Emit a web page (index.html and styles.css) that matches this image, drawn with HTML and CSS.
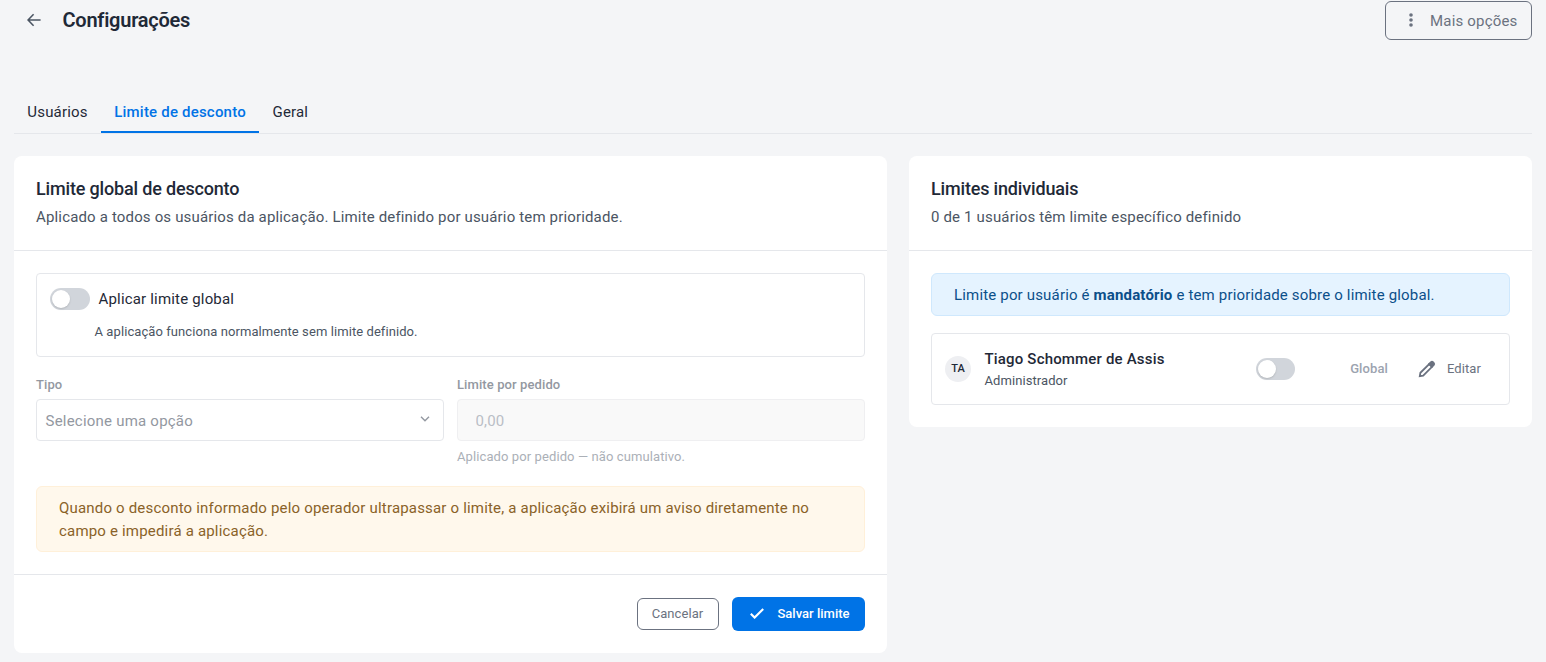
FILE: index.html
```html
<!DOCTYPE html>
<html lang="pt-BR">
<head>
  <meta charset="UTF-8" />
  <title>Configurações</title>
  <link rel="stylesheet" href="styles.css">
</head>
<body>

  <!-- Cabeçalho -->
  <header class="page-header">
    <a class="back" href="#" aria-label="Voltar">
      <svg width="14" height="14" viewBox="0 0 14 14" fill="none" stroke="currentColor" stroke-width="1.6">
        <path d="M13.6 7H1.4M6.6 1.2L1 7l5.6 5.8"></path>
      </svg>
    </a>
    <h1>Configurações</h1>
    <button class="btn btn-outline btn-more">
      <svg width="4" height="14" viewBox="0 0 4 14" fill="currentColor">
        <circle cx="2" cy="2" r="1.8"></circle>
        <circle cx="2" cy="7" r="1.8"></circle>
        <circle cx="2" cy="12" r="1.8"></circle>
      </svg>
      <span>Mais opções</span>
    </button>
  </header>

  <!-- Abas -->
  <nav class="tabs">
    <a class="tab" href="#">Usuários</a>
    <a class="tab active" href="#">Limite de desconto</a>
    <a class="tab" href="#">Geral</a>
  </nav>

  <main class="content">
    <!-- Limite global -->
    <section class="card">
      <div class="card-header">
        <h2>Limite global de desconto</h2>
        <p>Aplicado a todos os usuários da aplicação. Limite definido por usuário tem prioridade.</p>
      </div>

      <div class="card-body">
        <div class="switch-box">
          <label class="switch-line">
            <span class="switch"></span>
            <span>Aplicar limite global</span>
          </label>
          <p class="switch-help">A aplicação funciona normalmente sem limite definido.</p>
        </div>

        <div class="fields">
          <div class="field">
            <label>Tipo</label>
            <div class="select">
              <span>Selecione uma opção</span>
              <svg width="10" height="6" viewBox="0 0 10 6" fill="none" stroke="currentColor" stroke-width="1.4">
                <path d="M1 0.8l4 4 4-4"></path>
              </svg>
            </div>
          </div>
          <div class="field">
            <label for="limite">Limite por pedido</label>
            <input type="text" id="limite" placeholder="0,00" disabled>
            <small>Aplicado por pedido — não cumulativo.</small>
          </div>
        </div>

        <div class="alert alert-warning">
          Quando o desconto informado pelo operador ultrapassar o limite, a aplicação exibirá um aviso diretamente no campo e impedirá a aplicação.
        </div>
      </div>

      <div class="card-footer">
        <button class="btn btn-outline btn-cancel">Cancelar</button>
        <button class="btn btn-primary">
          <svg width="14" height="11" viewBox="0 0 14 11" fill="none" stroke="currentColor" stroke-width="2.1">
            <path d="M0.8 5.8l3.8 3.8L13.2 1"></path>
          </svg>
          <span>Salvar limite</span>
        </button>
      </div>
    </section>

    <!-- Limites individuais -->
    <section class="card">
      <div class="card-header">
        <h2>Limites individuais</h2>
        <p>0 de 1 usuários têm limite específico definido</p>
      </div>

      <div class="card-body">
        <div class="alert alert-info">
          Limite por usuário é <strong>mandatório</strong> e tem prioridade sobre o limite global.
        </div>

        <div class="user-row">
          <span class="avatar">TA</span>
          <div class="user-info">
            <strong>Tiago Schommer de Assis</strong>
            <span>Administrador</span>
          </div>
          <span class="switch switch-user"></span>
          <span class="user-limit">Global</span>
          <button class="btn-edit">
            <svg width="18" height="18" viewBox="0 0 18 18" fill="none" stroke="currentColor" stroke-width="1.8">
              <path d="M1.8 16.2l.6-3.4 8.8-8.8 2.8 2.8-8.8 8.8z"></path>
              <path d="M11.2 4l1.8-1.8q1-.8 2 0l.8.8q.8 1 0 2L14 6.8z" fill="currentColor"></path>
            </svg>
            <span>Editar</span>
          </button>
        </div>
      </div>
    </section>
  </main>

</body>
</html>
```
FILE: styles.css
```css
:root {
  --color-primary: #0073e6;
  --color-bg: #f4f5f7;
  --color-dark: #1f2937;
  --color-text: #4b5563;
  --color-muted: #6b7280;
  --color-border: #e5e7eb;
}

* {
  box-sizing: border-box;
  margin: 0;
  padding: 0;
}
body {
  background: var(--color-bg);
  font-family: Roboto, sans-serif;
  font-size: 15px;
  letter-spacing: 0.18px;
  color: var(--color-dark);
  padding: 1px 14px 0;
}
a {
  color: inherit;
  text-decoration: none;
}
button,
input {
  font: inherit;
  letter-spacing: inherit;
}

/* Cabeçalho */
.page-header {
  display: flex;
  align-items: center;
  height: 39px;
  padding-left: 13px;
}
.page-header h1 {
  flex: 1;
  margin-left: 21.5px;
  padding-bottom: 2px;
  font-size: 20px;
  font-weight: 600;
  letter-spacing: -0.25px;
}
.back {
  display: flex;
  padding-bottom: 1px;
  color: var(--color-text);
}

/* Botões */
.btn {
  display: flex;
  align-items: center;
  justify-content: center;
  border-radius: 6px;
  cursor: pointer;
}
.btn-outline {
  background: transparent;
  border: 1px solid var(--color-muted);
  color: var(--color-muted);
}
.btn-more {
  width: 147px;
  height: 39px;
  gap: 17.5px;
  padding-left: 9px;
}
.btn-more svg {
  margin-bottom: 2px;
}
.btn-cancel {
  width: 82px;
  height: 32px;
  padding: 0 1px 2px 0;
  font-size: 13px;
  letter-spacing: 0.08px;
}
.btn-primary {
  width: 133px;
  height: 34px;
  gap: 13px;
  padding: 0 0 1px 3px;
  background: var(--color-primary);
  border: none;
  color: #fff;
  font-size: 13px;
  font-weight: 500;
  letter-spacing: 0.02px;
}

/* Abas */
.tabs {
  display: flex;
  height: 42px;
  margin-top: 52px;
  border-bottom: 1px solid var(--color-border);
}
.tab {
  height: 41px;
  padding: 0 13.3px;
  line-height: 40px;
  border-bottom: 2px solid transparent;
}
.tab.active {
  color: var(--color-primary);
  border-bottom-color: var(--color-primary);
  font-weight: 500;
  letter-spacing: 0.2px;
}

/* Cartões */
.content {
  display: grid;
  grid-template-columns: 873px 1fr;
  align-items: start;
  gap: 22px;
  margin-top: 22px;
}
.card {
  background: #fff;
  border-radius: 8px;
}
.card-header {
  height: 95px;
  padding: 22px 22px 0;
  border-bottom: 1px solid var(--color-border);
}
.card-header h2 {
  font-size: 18px;
  font-weight: 500;
  line-height: 22px;
  letter-spacing: -0.17px;
}
.card-header p {
  margin-top: 6px;
  line-height: 23px;
  letter-spacing: 0.16px;
  color: var(--color-text);
}
.card-body {
  padding: 22px;
}
.card-footer {
  display: flex;
  align-items: center;
  justify-content: flex-end;
  gap: 13px;
  padding: 22px;
  border-top: 1px solid var(--color-border);
}

/* Chave liga/desliga */
.switch {
  display: flex;
  align-items: center;
  flex-shrink: 0;
  width: 40px;
  height: 22px;
  padding-left: 2px;
  border-radius: 11px;
  background: #d1d5db;
}
.switch::before {
  content: "";
  width: 18px;
  height: 18px;
  border-radius: 50%;
  background: #fff;
  box-shadow: 0 1px 2px rgba(0, 0, 0, 0.15);
}
.switch-box {
  height: 84px;
  padding: 14px 13px;
  border: 1px solid var(--color-border);
  border-radius: 4px;
}
.switch-line {
  display: flex;
  align-items: center;
  gap: 8.5px;
}
.switch-help {
  margin: 13px 0 0 44.5px;
  font-size: 13px;
  line-height: 18px;
  letter-spacing: 0.08px;
  color: var(--color-text);
}

/* Campos */
.fields {
  display: grid;
  grid-template-columns: 1fr 1fr;
  gap: 13px;
  margin-top: 18px;
}
.field label {
  display: block;
  height: 24px;
  font-size: 13px;
  font-weight: 500;
  line-height: 19px;
  letter-spacing: 0.1px;
  color: #9398a1;
}
.field small {
  display: block;
  margin-top: 7px;
  font-size: 13px;
  line-height: 18px;
  letter-spacing: 0.1px;
  color: #abb0b7;
}
.select,
.field input {
  width: 100%;
  height: 42px;
  border: 1px solid var(--color-border);
  border-radius: 4px;
}
.select {
  display: flex;
  align-items: center;
  justify-content: space-between;
  padding: 2px 13px 0 8.5px;
  letter-spacing: 0.22px;
  color: #9398a1;
}
.select svg {
  margin-top: -4px;
}
.field input {
  padding: 2px 17.5px 0;
  background: #f9f9f9;
  border-color: #efeff1;
}
.field input::placeholder {
  color: #b9bec6;
}

/* Avisos */
.alert {
  padding: 10px 22px 8px;
  border: 1px solid;
  border-radius: 6px;
  line-height: 23px;
}
.alert-warning {
  margin-top: 20px;
  background: #fff8ec;
  border-color: #fff0d9;
  color: #8a6228;
  letter-spacing: 0.185px;
}
.alert-info {
  background: #e5f3ff;
  border-color: #cfe8fd;
  color: #0b4f8a;
  letter-spacing: 0.17px;
}

/* Usuários */
.user-row {
  display: flex;
  align-items: center;
  height: 72px;
  margin-top: 17px;
  padding: 0 28px 0 13px;
  border: 1px solid var(--color-border);
  border-radius: 4px;
}
.avatar {
  width: 26px;
  height: 26px;
  border-radius: 50%;
  background: #eeeff2;
  font-size: 11px;
  font-weight: 500;
  line-height: 25px;
  text-align: center;
  letter-spacing: 0;
}
.user-info {
  display: flex;
  flex-direction: column;
  flex: 1;
  margin-left: 13.5px;
}
.user-info strong {
  font-weight: 500;
  line-height: 23px;
}
.user-info span {
  font-size: 13px;
  line-height: 20px;
  letter-spacing: 0.08px;
  color: var(--color-text);
}
.switch-user {
  width: 39px;
}
.user-limit {
  margin-left: 55px;
  padding-bottom: 2px;
  font-size: 13px;
  font-weight: 500;
  letter-spacing: 0.1px;
  color: #9ca3af;
}
.btn-edit {
  display: flex;
  align-items: center;
  gap: 11px;
  margin-left: 30px;
  background: none;
  border: none;
  color: var(--color-muted);
  font-size: 13px;
  letter-spacing: 0.1px;
  cursor: pointer;
}
.btn-edit span {
  padding-bottom: 2px;
}
```
